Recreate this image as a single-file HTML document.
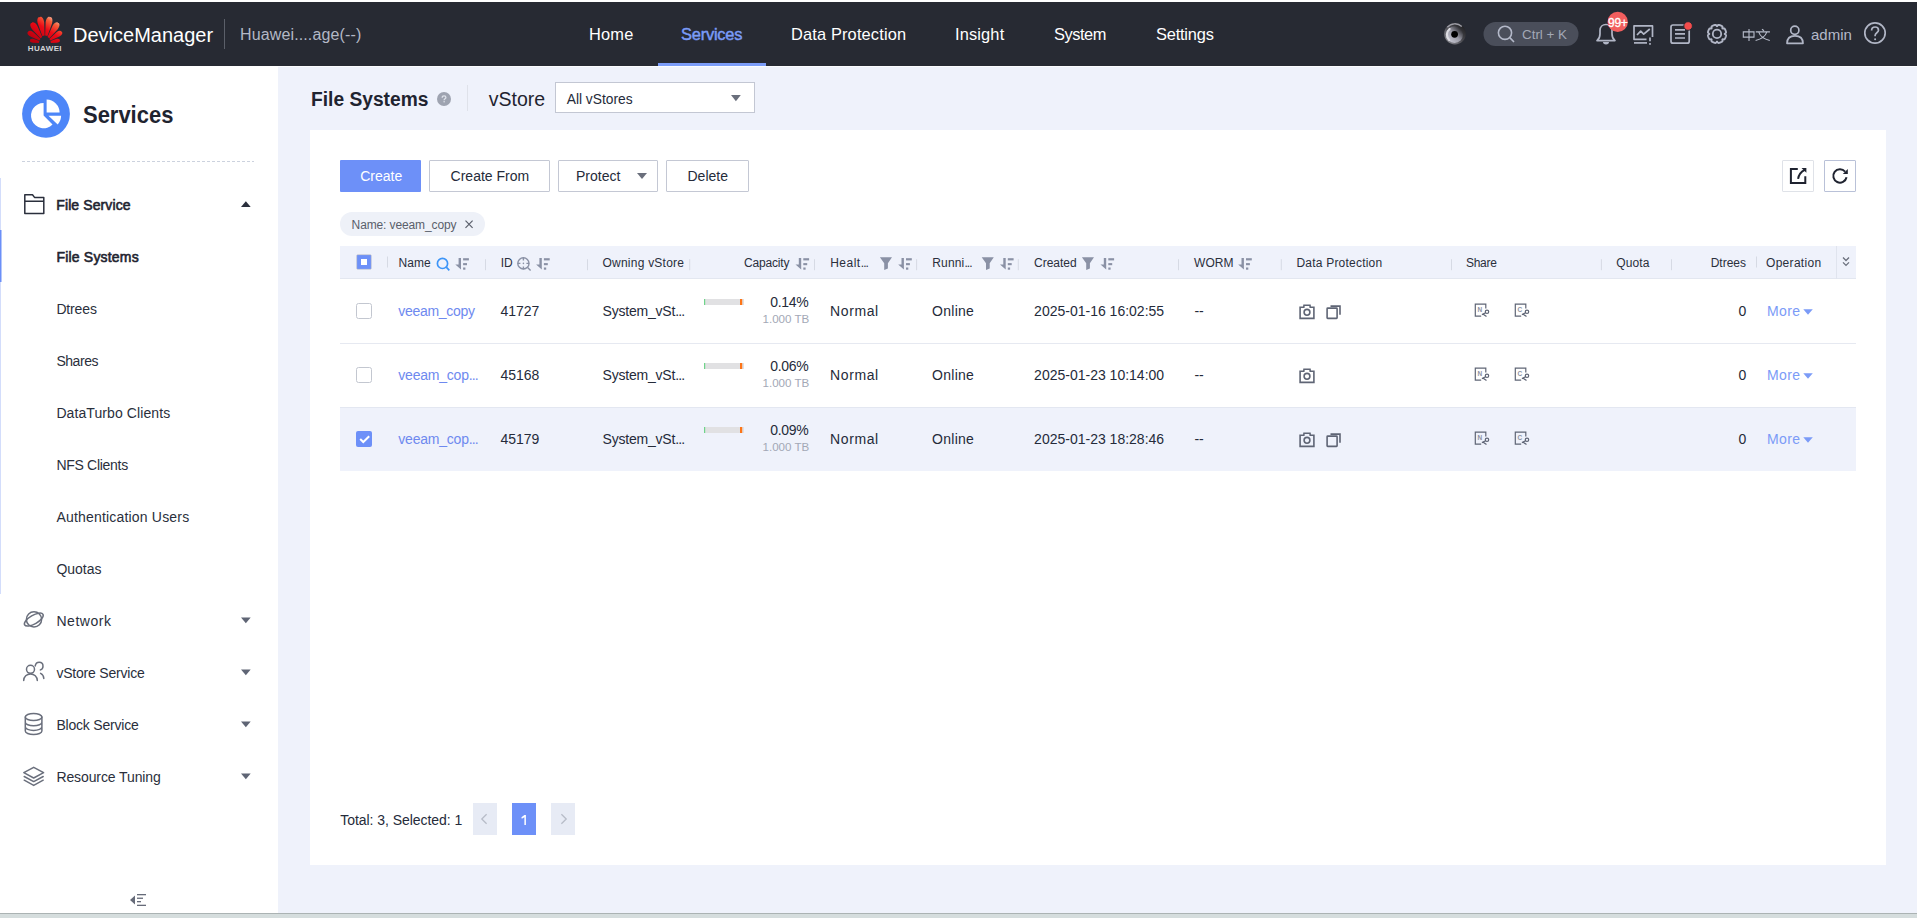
<!DOCTYPE html>
<html><head><meta charset="utf-8">
<style>
*{box-sizing:border-box;margin:0;padding:0}
html,body{width:1917px;height:918px;overflow:hidden}
body{position:relative;background:#eff2fb;font-family:"Liberation Sans",sans-serif;color:#252b3a}
.a{position:absolute;white-space:nowrap;line-height:1}
svg{position:absolute;overflow:visible}
.btn{position:absolute;height:32px;top:160px;border:1px solid #c4c8d4;background:#fff;border-radius:1px}
.el{letter-spacing:-0.9px}
</style></head>
<body>
<div style="position:absolute;left:0;top:0;width:1917px;height:2px;background:#fff"></div>
<div style="position:absolute;left:0;top:2px;width:1917px;height:64px;background:#272a33"></div>
<div style="position:absolute;left:0;top:66px;width:1917px;height:1px;background:#fbfcfe"></div>
<div style="position:absolute;left:0;top:66px;width:278px;height:848px;background:#fff"></div>
<div style="position:absolute;left:310px;top:130px;width:1576px;height:735px;background:#fff"></div>
<div style="position:absolute;left:0;top:913px;width:1917px;height:5px;background:#d5dddd;border-top:1px solid #abb3b3"></div>
<div class="a" style="left:311px;top:89px;font-size:20px;font-weight:700;color:#1f2430;transform:scaleX(0.96);transform-origin:0 0">File Systems</div>
<div class="a" style="left:488.8px;top:90px;font-size:19.5px;color:#1f2430">vStore</div>
<div style="position:absolute;left:555px;top:82px;width:200px;height:31px;border:1px solid #c3c7d3;background:#fff"></div>
<div class="a" style="left:566.7px;top:93px;font-size:13.8px;color:#252b3a">All vStores</div>
<div style="position:absolute;left:340px;top:160px;width:81px;height:32px;background:#6d90f8;border-radius:1px"></div>
<div class="btn" style="left:429px;width:121px"></div>
<div class="btn" style="left:558px;width:100px"></div>
<div class="btn" style="left:666px;width:83px"></div>
<div class="btn" style="left:1782px;width:32px;border-color:#dfe2e8"></div>
<div class="btn" style="left:1824px;width:32px;border-color:#b9c1d8"></div>
<div class="a" style="left:360.2px;top:169px;font-size:14px;color:#fff">Create</div>
<div class="a" style="left:450.6px;top:169px;font-size:14px;color:#252b3a">Create From</div>
<div class="a" style="left:576px;top:169px;font-size:14px;color:#252b3a">Protect</div>
<div class="a" style="left:687.5px;top:169px;font-size:14px;color:#252b3a">Delete</div>
<div style="position:absolute;left:340px;top:212px;width:145px;height:24px;border-radius:12px;background:#eef1f8"></div>
<div class="a" style="left:351.6px;top:219px;font-size:12px;color:#5a5f6b;letter-spacing:-0.12px">Name: veeam_copy</div>
<div style="position:absolute;left:340px;top:246px;width:1516px;height:33px;background:#eff2fb;border-bottom:1px solid #e3e7f0"></div>
<div style="position:absolute;left:340px;top:343px;width:1516px;height:1px;background:#e6e9f1"></div>
<div style="position:absolute;left:340px;top:407px;width:1516px;height:64px;background:#eff2fb"></div>
<div style="position:absolute;left:340px;top:407px;width:1516px;height:1px;background:#e3e7f1"></div>
<div class="a" style="left:398.6px;top:257px;font-size:12px;color:#2a2f3c;letter-spacing:0px">Name</div>
<div class="a" style="left:500.7px;top:257px;font-size:12px;color:#2a2f3c;letter-spacing:0px">ID</div>
<div class="a" style="left:602.5px;top:257px;font-size:12px;color:#2a2f3c;letter-spacing:0.23px">Owning vStore</div>
<div class="a" style="left:830.2px;top:257px;font-size:12px;color:#2a2f3c;letter-spacing:0px"><span style="letter-spacing:0.5px">Healt</span><span class="el">...</span></div>
<div class="a" style="left:932.3px;top:257px;font-size:12px;color:#2a2f3c;letter-spacing:0.15px">Runni<span class="el">...</span></div>
<div class="a" style="left:1034px;top:257px;font-size:12px;color:#2a2f3c;letter-spacing:0px">Created</div>
<div class="a" style="left:1194.1px;top:257px;font-size:12px;color:#2a2f3c;letter-spacing:0px">WORM</div>
<div class="a" style="left:1296.4px;top:257px;font-size:12px;color:#2a2f3c;letter-spacing:0.22px">Data Protection</div>
<div class="a" style="left:1466px;top:257px;font-size:12px;color:#2a2f3c;letter-spacing:-0.3px">Share</div>
<div class="a" style="left:1616.3px;top:257px;font-size:12px;color:#2a2f3c;letter-spacing:0.1px">Quota</div>
<div class="a" style="left:1766px;top:257px;font-size:12px;color:#2a2f3c;letter-spacing:0.3px">Operation</div>
<div class="a" style="right:1127.8px;top:257px;font-size:12px;text-align:right;color:#2a2f3c;letter-spacing:-0.18px">Capacity</div>
<div class="a" style="right:171px;top:257px;font-size:12px;text-align:right;color:#2a2f3c">Dtrees</div>
<div class="a" style="left:398.3px;top:304px;font-size:14px;color:#6e89ef;letter-spacing:-0.3px">veeam_copy</div>
<div class="a" style="left:500.4px;top:304px;font-size:14px;color:#252b3a">41727</div>
<div class="a" style="left:602.5px;top:304px;font-size:14px;color:#252b3a;letter-spacing:-0.2px">System_vSt<span class="el">...</span></div>
<div class="a" style="right:1108.5px;top:295px;font-size:14px;text-align:right;color:#252b3a;letter-spacing:-0.3px">0.14%</div>
<div class="a" style="right:1107.7px;top:313px;font-size:11.6px;text-align:right;color:#a3a8b6">1.000 TB</div>
<div class="a" style="left:830.1px;top:304px;font-size:14px;color:#252b3a;letter-spacing:0.6px">Normal</div>
<div class="a" style="left:932.1px;top:304px;font-size:14px;color:#252b3a;letter-spacing:0.25px">Online</div>
<div class="a" style="left:1034.1px;top:304px;font-size:14px;color:#252b3a">2025-01-16 16:02:55</div>
<div class="a" style="left:1194.4px;top:304px;font-size:14px;color:#252b3a">--</div>
<div class="a" style="right:170.70000000000005px;top:304px;font-size:14px;text-align:right;color:#252b3a">0</div>
<div class="a" style="left:1766.9px;top:304px;font-size:14px;color:#7b9bf7;letter-spacing:0.4px">More</div>
<div class="a" style="left:398.3px;top:368px;font-size:14px;color:#6e89ef;letter-spacing:-0.22px">veeam_cop<span class="el">...</span></div>
<div class="a" style="left:500.4px;top:368px;font-size:14px;color:#252b3a">45168</div>
<div class="a" style="left:602.5px;top:368px;font-size:14px;color:#252b3a;letter-spacing:-0.2px">System_vSt<span class="el">...</span></div>
<div class="a" style="right:1108.5px;top:359px;font-size:14px;text-align:right;color:#252b3a;letter-spacing:-0.3px">0.06%</div>
<div class="a" style="right:1107.7px;top:377px;font-size:11.6px;text-align:right;color:#a3a8b6">1.000 TB</div>
<div class="a" style="left:830.1px;top:368px;font-size:14px;color:#252b3a;letter-spacing:0.6px">Normal</div>
<div class="a" style="left:932.1px;top:368px;font-size:14px;color:#252b3a;letter-spacing:0.25px">Online</div>
<div class="a" style="left:1034.1px;top:368px;font-size:14px;color:#252b3a">2025-01-23 10:14:00</div>
<div class="a" style="left:1194.4px;top:368px;font-size:14px;color:#252b3a">--</div>
<div class="a" style="right:170.70000000000005px;top:368px;font-size:14px;text-align:right;color:#252b3a">0</div>
<div class="a" style="left:1766.9px;top:368px;font-size:14px;color:#7b9bf7;letter-spacing:0.4px">More</div>
<div class="a" style="left:398.3px;top:432px;font-size:14px;color:#6e89ef;letter-spacing:-0.22px">veeam_cop<span class="el">...</span></div>
<div class="a" style="left:500.4px;top:432px;font-size:14px;color:#252b3a">45179</div>
<div class="a" style="left:602.5px;top:432px;font-size:14px;color:#252b3a;letter-spacing:-0.2px">System_vSt<span class="el">...</span></div>
<div class="a" style="right:1108.5px;top:423px;font-size:14px;text-align:right;color:#252b3a;letter-spacing:-0.3px">0.09%</div>
<div class="a" style="right:1107.7px;top:441px;font-size:11.6px;text-align:right;color:#a3a8b6">1.000 TB</div>
<div class="a" style="left:830.1px;top:432px;font-size:14px;color:#252b3a;letter-spacing:0.6px">Normal</div>
<div class="a" style="left:932.1px;top:432px;font-size:14px;color:#252b3a;letter-spacing:0.25px">Online</div>
<div class="a" style="left:1034.1px;top:432px;font-size:14px;color:#252b3a">2025-01-23 18:28:46</div>
<div class="a" style="left:1194.4px;top:432px;font-size:14px;color:#252b3a">--</div>
<div class="a" style="right:170.70000000000005px;top:432px;font-size:14px;text-align:right;color:#252b3a">0</div>
<div class="a" style="left:1766.9px;top:432px;font-size:14px;color:#7b9bf7;letter-spacing:0.4px">More</div>
<div class="a" style="left:340.3px;top:813px;font-size:14px;color:#252b3a;letter-spacing:-0.05px">Total: 3, Selected: 1</div>
<div style="position:absolute;left:473px;top:803px;width:24px;height:32px;background:#e7ebf5"></div>
<div style="position:absolute;left:512px;top:803px;width:24px;height:32px;background:#6d90f8"></div>
<div style="position:absolute;left:551px;top:803px;width:24px;height:32px;background:#e7ebf5"></div>
<svg style="left:0;top:0" width="1917" height="918" viewBox="0 0 1917 918">
<circle cx="444" cy="99" r="7" fill="#9ea3b0"/>
<path d="M442.2,97.7 C442.2,96.5 443,95.9 444.1,95.9 C445.1,95.9 445.9,96.5 445.9,97.5 C445.9,98.7 444.1,98.9 444.1,100.2" fill="none" stroke="#dfe2ea" stroke-width="1.3"/><circle cx="444.1" cy="101.7" r="0.75" fill="#dfe2ea"/>
<rect x="467" y="85" width="1" height="26" fill="#dfe2ea"/>
<path d="M731,95 L740.8,95 L735.9,101.3 Z" fill="#6a6f7c"/>
<path d="M637,173 L647,173 L642,179 Z" fill="#6a6f7c"/>
<path d="M465.5,220.7 L472.6,227.8 M472.6,220.7 L465.5,227.8" stroke="#5a5f6b" stroke-width="1.2"/>
<g fill="none" stroke="#1f2330" stroke-width="2"><path d="M1797.8,168.9 L1790.9,168.9 L1790.9,183 L1805.3,183 L1805.3,176.2"/><path d="M1798.1,178.8 C1798.6,174.8 1800.8,171.8 1804.8,169.8"/></g>
<path d="M1801.5,167.9 L1806.4,167.9 L1806.4,172.8 Z" fill="#1f2330"/>
<g fill="none" stroke="#1f2330" stroke-width="2"><path d="M1846.55,177.3 A6.7,6.7 0 1 1 1845.1,171.6"/></g>
<path d="M1847.8,168.9 L1847.8,174.1 L1842.8,174.1 Z" fill="#1f2330"/>
<g fill="#d6dae4"><rect x="387.0" y="256.5" width="1" height="11"/><rect x="1756.0" y="256.5" width="1" height="11"/><rect x="485.0" y="259.2" width="1" height="11"/><rect x="587.0" y="259.2" width="1" height="11"/><rect x="689.2" y="259.2" width="1" height="11"/><rect x="814.0" y="259.2" width="1" height="11"/><rect x="916.1" y="259.2" width="1" height="11"/><rect x="1017.8" y="259.2" width="1" height="11"/><rect x="1178.0" y="259.2" width="1" height="11"/><rect x="1280.8" y="259.2" width="1" height="11"/><rect x="1451.0" y="259.2" width="1" height="11"/><rect x="1600.9" y="259.2" width="1" height="11"/><rect x="1671.0" y="259.2" width="1" height="11"/></g>
<rect x="1836" y="246" width="1" height="33" fill="#e0e4ee"/>
<path d="M1843,257.5 L1846,260.5 L1849,257.5 M1843,262.4 L1846,265.4 L1849,262.4" fill="none" stroke="#6a6f7c" stroke-width="1.3"/>
<rect x="356.7" y="254.7" width="14.6" height="14.6" rx="1" fill="#6d90f8" stroke="#cfc8bd" stroke-width="0.5"/><rect x="361" y="259" width="6" height="6" fill="#fff"/>
<g fill="none" stroke="#3d95f8" stroke-width="1.7"><circle cx="442.5" cy="263.4" r="5.1"/><path d="M446.3,267.2 L449.3,270.3"/></g>
<g fill="none" stroke="#8a91a5" stroke-width="1.4"><circle cx="523.4" cy="263.4" r="5.6"/><path d="M523.4,257.6 V260.4 M523.4,266.4 V269.2 M517.6,263.4 H520.4 M526.4,263.4 H529.2 M527.6,267.6 L530.6,270.6"/></g><circle cx="523.4" cy="263.4" r="0.8" fill="#8a91a5"/>
<g fill="#8a91a5"><path d="M458.60,258.1 h2.4 v11.5 L455.30,264.40 h3.3 Z"/><rect x="463.10" y="258.20" width="5.8" height="2.2"/><rect x="463.10" y="263.10" width="3.9" height="2.1"/><rect x="463.10" y="267.50" width="2.3" height="2.2"/><path d="M539.40,258.1 h2.4 v11.5 L536.10,264.40 h3.3 Z"/><rect x="543.90" y="258.20" width="5.8" height="2.2"/><rect x="543.90" y="263.10" width="3.9" height="2.1"/><rect x="543.90" y="267.50" width="2.3" height="2.2"/><path d="M798.80,258.1 h2.4 v11.5 L795.50,264.40 h3.3 Z"/><rect x="803.30" y="258.20" width="5.8" height="2.2"/><rect x="803.30" y="263.10" width="3.9" height="2.1"/><rect x="803.30" y="267.50" width="2.3" height="2.2"/><path d="M901.50,258.1 h2.4 v11.5 L898.20,264.40 h3.3 Z"/><rect x="906.00" y="258.20" width="5.8" height="2.2"/><rect x="906.00" y="263.10" width="3.9" height="2.1"/><rect x="906.00" y="267.50" width="2.3" height="2.2"/><path d="M1003.30,258.1 h2.4 v11.5 L1000.00,264.40 h3.3 Z"/><rect x="1007.80" y="258.20" width="5.8" height="2.2"/><rect x="1007.80" y="263.10" width="3.9" height="2.1"/><rect x="1007.80" y="267.50" width="2.3" height="2.2"/><path d="M1103.80,258.1 h2.4 v11.5 L1100.50,264.40 h3.3 Z"/><rect x="1108.30" y="258.20" width="5.8" height="2.2"/><rect x="1108.30" y="263.10" width="3.9" height="2.1"/><rect x="1108.30" y="267.50" width="2.3" height="2.2"/><path d="M1241.50,258.1 h2.4 v11.5 L1238.20,264.40 h3.3 Z"/><rect x="1246.00" y="258.20" width="5.8" height="2.2"/><rect x="1246.00" y="263.10" width="3.9" height="2.1"/><rect x="1246.00" y="267.50" width="2.3" height="2.2"/><path d="M879.90,257.2 H892.00 L887.90,263.20 V268.60 L884.20,270.10 V263.20 Z"/><path d="M981.70,257.2 H993.80 L989.70,263.20 V268.60 L986.00,270.10 V263.20 Z"/><path d="M1081.90,257.2 H1094.00 L1089.90,263.20 V268.60 L1086.20,270.10 V263.20 Z"/></g>
<rect x="356.5" y="303.5" width="15" height="15" rx="2" fill="#fff" stroke="#c3c7d0" stroke-width="1"/>
<rect x="704" y="299" width="40" height="6" fill="#e1e1e3"/><rect x="704" y="299" width="1.2" height="6" fill="#6fd48a"/><rect x="740" y="299" width="2.2" height="6" fill="#fd7518"/>
<g fill="none" stroke="#5f6575" stroke-width="1.6"><path d="M1300.1,307.2 H1303.8 L1304,305.3 H1310 L1310.2,307.2 H1313.9 V318.4 H1300.1 Z"/><circle cx="1307" cy="312.3" r="2.9"/></g>
<g fill="none" stroke="#5f6575" stroke-width="1.6"><rect x="1327.1" y="308.1" width="10" height="10.3" rx="0.6"/><path d="M1330.5,306.1 H1340 V314.8"/></g>
<g fill="none" stroke="#5f6575" stroke-width="1.2"><path d="M1481.2,316.1 H1475.3 V304.2 H1485.8 V308.6"/><circle cx="1487.0" cy="311.8" r="1.7"/><path d="M1485.6,312.8 L1481.9,314.6 M1483.2,314.2 L1486.5,316.6"/></g>
<text x="1477.6" y="312" font-family="Liberation Sans" font-size="6.5" font-weight="700" fill="#8d92a0">N</text>
<g fill="none" stroke="#5f6575" stroke-width="1.2"><path d="M1521.2,316.1 H1515.3 V304.2 H1525.8 V308.6"/><circle cx="1527.0" cy="311.8" r="1.7"/><path d="M1525.6,312.8 L1521.9,314.6 M1523.2,314.2 L1526.5,316.6"/></g>
<text x="1517.6" y="312" font-family="Liberation Sans" font-size="6.5" font-weight="700" fill="#8d92a0">C</text>
<path d="M1803.3,309.2 L1812.8,309.2 L1808,314.8 Z" fill="#7b9bf7"/>
<rect x="356.5" y="367.5" width="15" height="15" rx="2" fill="#fff" stroke="#c3c7d0" stroke-width="1"/>
<rect x="704" y="363" width="40" height="6" fill="#e1e1e3"/><rect x="704" y="363" width="1.2" height="6" fill="#6fd48a"/><rect x="740" y="363" width="2.2" height="6" fill="#fd7518"/>
<g fill="none" stroke="#5f6575" stroke-width="1.6"><path d="M1300.1,371.2 H1303.8 L1304,369.3 H1310 L1310.2,371.2 H1313.9 V382.4 H1300.1 Z"/><circle cx="1307" cy="376.3" r="2.9"/></g>
<g fill="none" stroke="#5f6575" stroke-width="1.2"><path d="M1481.2,380.1 H1475.3 V368.2 H1485.8 V372.6"/><circle cx="1487.0" cy="375.8" r="1.7"/><path d="M1485.6,376.8 L1481.9,378.6 M1483.2,378.2 L1486.5,380.6"/></g>
<text x="1477.6" y="376" font-family="Liberation Sans" font-size="6.5" font-weight="700" fill="#8d92a0">N</text>
<g fill="none" stroke="#5f6575" stroke-width="1.2"><path d="M1521.2,380.1 H1515.3 V368.2 H1525.8 V372.6"/><circle cx="1527.0" cy="375.8" r="1.7"/><path d="M1525.6,376.8 L1521.9,378.6 M1523.2,378.2 L1526.5,380.6"/></g>
<text x="1517.6" y="376" font-family="Liberation Sans" font-size="6.5" font-weight="700" fill="#8d92a0">C</text>
<path d="M1803.3,373.2 L1812.8,373.2 L1808,378.8 Z" fill="#7b9bf7"/>
<rect x="356" y="431" width="16" height="16" rx="2" fill="#6d90f8"/><path d="M360.2,439 L363.3,442 L369.2,436.3" fill="none" stroke="#fff" stroke-width="2"/>
<rect x="704" y="427" width="40" height="6" fill="#e1e1e3"/><rect x="704" y="427" width="1.2" height="6" fill="#6fd48a"/><rect x="740" y="427" width="2.2" height="6" fill="#fd7518"/>
<g fill="none" stroke="#5f6575" stroke-width="1.6"><path d="M1300.1,435.2 H1303.8 L1304,433.3 H1310 L1310.2,435.2 H1313.9 V446.4 H1300.1 Z"/><circle cx="1307" cy="440.3" r="2.9"/></g>
<g fill="none" stroke="#5f6575" stroke-width="1.6"><rect x="1327.1" y="436.1" width="10" height="10.3" rx="0.6"/><path d="M1330.5,434.1 H1340 V442.8"/></g>
<g fill="none" stroke="#5f6575" stroke-width="1.2"><path d="M1481.2,444.1 H1475.3 V432.2 H1485.8 V436.6"/><circle cx="1487.0" cy="439.8" r="1.7"/><path d="M1485.6,440.8 L1481.9,442.6 M1483.2,442.2 L1486.5,444.6"/></g>
<text x="1477.6" y="440" font-family="Liberation Sans" font-size="6.5" font-weight="700" fill="#8d92a0">N</text>
<g fill="none" stroke="#5f6575" stroke-width="1.2"><path d="M1521.2,444.1 H1515.3 V432.2 H1525.8 V436.6"/><circle cx="1527.0" cy="439.8" r="1.7"/><path d="M1525.6,440.8 L1521.9,442.6 M1523.2,442.2 L1526.5,444.6"/></g>
<text x="1517.6" y="440" font-family="Liberation Sans" font-size="6.5" font-weight="700" fill="#8d92a0">C</text>
<path d="M1803.3,437.2 L1812.8,437.2 L1808,442.8 Z" fill="#7b9bf7"/>
<path d="M486.6,814.3 L481.8,819 L486.6,823.7" fill="none" stroke="#b7bcc8" stroke-width="1.3"/>
<path d="M561.4,814.3 L566.2,819 L561.4,823.7" fill="none" stroke="#b7bcc8" stroke-width="1.3"/>
<path d="M521.4,817.2 L524.4,814.9 L525.9,814.9 L525.9,824.9 L524.4,824.9 L524.4,817.3 L521.8,818.8 Z" fill="#fff"/>
</svg>

<!-- SIDEBAR -->
<svg style="left:0;top:66px" width="278" height="847" viewBox="0 66 278 847">
<circle cx="46" cy="113.95" r="23.9" fill="#4d86f8"/>
<g fill="#fff"><path d="M43.6,115.6 L52.51,124.51 A12.6,12.6 0 1 1 43.60,103.00 Z"/><path d="M46.6,112.6 L46.60,99.60 A13,13 0 0 1 59.60,112.60 Z"/><path d="M48.5,115.8 L61.10,115.80 A12.6,12.6 0 0 1 57.72,124.39 Z"/></g>
<line x1="22" y1="161.5" x2="254" y2="161.5" stroke="#ccd2de" stroke-width="1" stroke-dasharray="3,2"/>
<rect x="0" y="178" width="1" height="416" fill="#d3ddfb"/>
<rect x="0" y="230" width="1.5" height="52" fill="#6b8ff8"/>
<!-- folder icon -->
<path d="M24.8,213.6 L24.8,194.8 L32.5,194.8 L34.5,197.4 L43.8,197.4 L43.8,213.6 Z M24.8,201.3 L43.8,201.3" fill="none" stroke="#2a2f3c" stroke-width="1.5" stroke-linejoin="round"/>
<path d="M241,207 L250.7,207 L245.85,201.2 Z" fill="#2a2f3c"/>
<g fill="#5f6575">
<path d="M241,617.5 L250.7,617.5 L245.85,623.3 Z"/>
<path d="M241,669.5 L250.7,669.5 L245.85,675.3 Z"/>
<path d="M241,721.5 L250.7,721.5 L245.85,727.3 Z"/>
<path d="M241,773.5 L250.7,773.5 L245.85,779.3 Z"/>
</g>
<g fill="none" stroke="#6a6f7c" stroke-width="1.5" stroke-linecap="round" stroke-linejoin="round">
<!-- planet -->
<circle cx="34" cy="619.4" r="7.6"/>
<ellipse cx="33.8" cy="619.6" rx="10.6" ry="4.3" transform="rotate(-30 33.8 619.6)"/>
<!-- people -->
<circle cx="30.5" cy="669.3" r="4"/>
<path d="M23.7,680.6 C23.7,676.5 26.8,674 30.5,674 C34.2,674 37.3,676.5 37.3,680.6"/>
<path d="M35.2,665.9 C35.6,663.6 37.2,662.3 39.2,662.3 C41.4,662.3 43,664 43,666.2 C43,668 41.9,669.4 40.4,669.9 M40.6,673.3 C42.6,674.3 43.8,676.2 43.8,678.6"/>
<!-- database -->
<ellipse cx="33.6" cy="717" rx="8.3" ry="3.6"/>
<path d="M25.3,717 L25.3,731 C25.3,733 29,734.6 33.6,734.6 C38.2,734.6 41.9,733 41.9,731 L41.9,717 M25.3,722.2 C25.3,724.2 29,725.8 33.6,725.8 C38.2,725.8 41.9,724.2 41.9,722.2 M25.3,726.8 C25.3,728.8 29,730.4 33.6,730.4 C38.2,730.4 41.9,728.8 41.9,726.8"/>
<!-- layers -->
<path d="M23.8,772.7 L33.7,767.3 L43.6,772.7 L33.7,778 Z"/>
<path d="M24.2,776.5 L33.7,781.6 L43.2,776.5"/>
<path d="M24.2,780.2 L33.7,785.4 L43.2,780.2"/>
</g>
<!-- collapse -->
<g fill="#666b79">
<path d="M135,895.5 L135,904.5 L130,900 Z"/>
<rect x="137" y="894" width="9" height="1.3"/>
<rect x="137" y="897.6" width="6" height="1.3"/>
<rect x="137" y="901" width="4" height="1.3"/>
<rect x="137" y="904.7" width="9" height="1.3"/>
</g>
</svg>

<div class="a" style="left:83px;top:103px;font-size:24px;font-weight:700;color:#1f2430;transform:scaleX(0.915);transform-origin:0 0">Services</div>
<div class="a" style="left:56.3px;top:198px;font-size:14px;color:#1f2430;-webkit-text-stroke:0.6px #1f2430;letter-spacing:0.1px">File Service</div>
<div class="a" style="left:56.4px;top:250px;font-size:14px;color:#1f2430;-webkit-text-stroke:0.6px #1f2430;letter-spacing:0.2px">File Systems</div>
<div class="a" style="left:56.4px;top:302px;font-size:14px;color:#2a2f3c;letter-spacing:-0.15px">Dtrees</div>
<div class="a" style="left:56.4px;top:354px;font-size:14px;color:#2a2f3c;letter-spacing:-0.45px">Shares</div>
<div class="a" style="left:56.4px;top:406px;font-size:14px;color:#2a2f3c;letter-spacing:0.09px">DataTurbo Clients</div>
<div class="a" style="left:56.4px;top:458px;font-size:14px;color:#2a2f3c;letter-spacing:-0.29px">NFS Clients</div>
<div class="a" style="left:56.4px;top:510px;font-size:14px;color:#2a2f3c;letter-spacing:0.19px">Authentication Users</div>
<div class="a" style="left:56.4px;top:562px;font-size:14px;color:#2a2f3c;letter-spacing:0px">Quotas</div>
<div class="a" style="left:56.4px;top:614px;font-size:14px;color:#2a2f3c;letter-spacing:0.55px">Network</div>
<div class="a" style="left:56.4px;top:666px;font-size:14px;color:#2a2f3c;letter-spacing:-0.2px">vStore Service</div>
<div class="a" style="left:56.4px;top:718px;font-size:14px;color:#2a2f3c;letter-spacing:-0.2px">Block Service</div>
<div class="a" style="left:56.4px;top:770px;font-size:14px;color:#2a2f3c;letter-spacing:-0.1px">Resource Tuning</div>

<svg style="left:0;top:0" width="1917" height="70" viewBox="0 0 1917 70">
<defs>
<linearGradient id="pg" gradientUnits="userSpaceOnUse" x1="36" y1="42" x2="52" y2="17"><stop offset="0" stop-color="#b8000e"/><stop offset="0.55" stop-color="#ec0a16"/><stop offset="0.85" stop-color="#f5603a"/><stop offset="1" stop-color="#f6b09a"/></linearGradient>
<linearGradient id="eyeo" x1="0" y1="1" x2="1" y2="0"><stop offset="0" stop-color="#9a9aa2"/><stop offset="0.5" stop-color="#4a4a50"/><stop offset="1" stop-color="#141416"/></linearGradient><linearGradient id="eyei" x1="0.1" y1="0.9" x2="0.9" y2="0.1"><stop offset="0" stop-color="#c8c8d4"/><stop offset="0.5" stop-color="#9a9aa6"/><stop offset="1" stop-color="#1e1e22"/></linearGradient><radialGradient id="eyeg" cx="0.35" cy="0.6" r="0.7"><stop offset="0" stop-color="#e8e8ec"/><stop offset="0.45" stop-color="#b9b9c2"/><stop offset="0.8" stop-color="#3a3a40"/><stop offset="1" stop-color="#111"/></radialGradient>
</defs>
<g fill="url(#pg)">
<path d="M45.16,35.50 L45.63,22.21 C46.32,16.00 50.16,15.95 49.86,17.48 C50.16,15.95 53.70,17.43 52.01,23.45 L47.47,35.95 Z"/>
<path d="M44.64,35.50 L44.17,22.21 C43.48,16.00 39.64,15.95 39.94,17.48 C39.64,15.95 36.10,17.43 37.79,23.45 L42.33,35.95 Z"/>
<path d="M47.54,37.06 L52.55,25.83 C55.23,20.85 58.65,22.23 57.87,23.40 C58.65,22.23 61.25,24.84 57.72,29.25 L49.33,38.25 Z"/>
<path d="M42.26,37.06 L37.25,25.83 C34.57,20.85 31.15,22.23 31.93,23.40 C31.15,22.23 28.55,24.84 32.08,29.25 L40.47,38.25 Z"/>
<path d="M49.29,38.91 L56.48,32.20 C60.20,29.22 62.40,31.42 61.41,32.07 C62.40,31.42 63.56,34.30 59.37,36.56 L50.38,40.56 Z"/>
<path d="M40.51,38.91 L33.32,32.20 C29.60,29.22 27.40,31.42 28.39,32.07 C27.40,31.42 26.24,34.30 30.43,36.56 L39.42,40.56 Z"/>
<path d="M50.54,40.95 L56.03,38.95 C59.45,37.99 60.33,40.14 59.45,40.30 C60.33,40.14 60.28,42.46 56.74,42.79 L50.90,42.90 Z"/>
<path d="M39.26,40.95 L33.77,38.95 C30.35,37.99 29.47,40.14 30.35,40.30 C29.47,40.14 29.52,42.46 33.06,42.79 L38.90,42.90 Z"/>
</g>
<rect x="224" y="19" width="1" height="30" fill="#5b5f69"/>
<rect x="658" y="63" width="108" height="3" fill="#7b9cf8"/>
<!-- eye -->
<circle cx="1455" cy="33.7" r="10.8" fill="url(#eyeo)"/>
<path d="M1447.3,27.3 A10,10 0 0 1 1461.8,26.6" fill="none" stroke="#9d9da5" stroke-width="1.4"/>
<circle cx="1454.6" cy="34.6" r="8.4" fill="url(#eyei)"/>
<path d="M1449.2,40 A7.3,7.3 0 0 1 1449.6,29" fill="none" stroke="#dcdce2" stroke-width="2.2" stroke-linecap="round"/>
<circle cx="1454.6" cy="34.3" r="3.4" fill="#000"/>
<!-- search pill -->
<rect x="1483.5" y="22" width="95" height="24" rx="12" fill="#4a4e5a"/>
<g fill="none" stroke="#b4b9c9" stroke-width="1.6">
<circle cx="1505" cy="32.8" r="6.6"/>
<path d="M1509.8,37.6 L1514,42"/>
</g>
<g fill="none" stroke="#b1b6c6" stroke-width="1.7" stroke-linejoin="round">
<!-- bell -->
<path d="M1597,40.6 C1599.3,38.8 1600,36.5 1600,34 L1600,30.5 C1600,26.7 1602.7,24.5 1606,24.5 C1609.3,24.5 1612,26.7 1612,30.5 L1612,34 C1612,36.5 1612.7,38.8 1615,40.6 Z"/>
<!-- monitor -->
<path d="M1646.5,39.3 L1634,39.3 L1634,25.9 L1652.5,25.9 L1652.5,37"/>
<path d="M1637,35 L1640.7,31.2 L1643.7,34.2 L1649.8,29"/>
<path d="M1634,42.9 L1647,42.9"/>
<path d="M1650,37.5 L1650,41.3"/>
<!-- doc -->
<rect x="1671" y="25" width="18.2" height="18.2" rx="2"/>
<path d="M1675,29.9 L1685,29.9 M1675,33.9 L1685,33.9 M1675,38 L1685,38"/>
<!-- gear -->
<path d="M1724.70,33.90 L1724.79,34.10 L1725.05,34.32 L1725.38,34.56 L1725.70,34.81 L1725.94,35.08 L1726.04,35.33 L1726.04,35.58 L1726.00,35.81 L1725.95,36.05 L1725.89,36.28 L1725.82,36.51 L1725.75,36.74 L1725.67,36.97 L1725.59,37.20 L1725.50,37.42 L1725.40,37.64 L1725.30,37.86 L1725.20,38.08 L1725.09,38.29 L1724.97,38.50 L1724.84,38.71 L1724.72,38.91 L1724.58,39.11 L1724.41,39.28 L1724.15,39.39 L1723.80,39.41 L1723.39,39.36 L1722.99,39.29 L1722.66,39.27 L1722.44,39.34 L1722.37,39.56 L1722.39,39.89 L1722.46,40.29 L1722.51,40.70 L1722.49,41.05 L1722.38,41.31 L1722.21,41.48 L1722.01,41.62 L1721.81,41.74 L1721.60,41.87 L1721.39,41.99 L1721.18,42.10 L1720.96,42.20 L1720.74,42.30 L1720.52,42.40 L1720.30,42.49 L1720.07,42.57 L1719.84,42.65 L1719.61,42.72 L1719.38,42.79 L1719.15,42.85 L1718.91,42.90 L1718.68,42.94 L1718.43,42.94 L1718.18,42.84 L1717.91,42.60 L1717.66,42.28 L1717.42,41.95 L1717.20,41.69 L1717.00,41.60 L1716.80,41.69 L1716.58,41.95 L1716.34,42.28 L1716.09,42.60 L1715.82,42.84 L1715.57,42.94 L1715.32,42.94 L1715.09,42.90 L1714.85,42.85 L1714.62,42.79 L1714.39,42.72 L1714.16,42.65 L1713.93,42.57 L1713.70,42.49 L1713.48,42.40 L1713.26,42.30 L1713.04,42.20 L1712.82,42.10 L1712.61,41.99 L1712.40,41.87 L1712.19,41.74 L1711.99,41.62 L1711.79,41.48 L1711.62,41.31 L1711.51,41.05 L1711.49,40.70 L1711.54,40.29 L1711.61,39.89 L1711.63,39.56 L1711.56,39.34 L1711.34,39.27 L1711.01,39.29 L1710.61,39.36 L1710.20,39.41 L1709.85,39.39 L1709.59,39.28 L1709.42,39.11 L1709.28,38.91 L1709.16,38.71 L1709.03,38.50 L1708.91,38.29 L1708.80,38.08 L1708.70,37.86 L1708.60,37.64 L1708.50,37.42 L1708.41,37.20 L1708.33,36.97 L1708.25,36.74 L1708.18,36.51 L1708.11,36.28 L1708.05,36.05 L1708.00,35.81 L1707.96,35.58 L1707.96,35.33 L1708.06,35.08 L1708.30,34.81 L1708.62,34.56 L1708.95,34.32 L1709.21,34.10 L1709.30,33.90 L1709.21,33.70 L1708.95,33.48 L1708.62,33.24 L1708.30,32.99 L1708.06,32.72 L1707.96,32.47 L1707.96,32.22 L1708.00,31.99 L1708.05,31.75 L1708.11,31.52 L1708.18,31.29 L1708.25,31.06 L1708.33,30.83 L1708.41,30.60 L1708.50,30.38 L1708.60,30.16 L1708.70,29.94 L1708.80,29.72 L1708.91,29.51 L1709.03,29.30 L1709.16,29.09 L1709.28,28.89 L1709.42,28.69 L1709.59,28.52 L1709.85,28.41 L1710.20,28.39 L1710.61,28.44 L1711.01,28.51 L1711.34,28.53 L1711.56,28.46 L1711.63,28.24 L1711.61,27.91 L1711.54,27.51 L1711.49,27.10 L1711.51,26.75 L1711.62,26.49 L1711.79,26.32 L1711.99,26.18 L1712.19,26.06 L1712.40,25.93 L1712.61,25.81 L1712.82,25.70 L1713.04,25.60 L1713.26,25.50 L1713.48,25.40 L1713.70,25.31 L1713.93,25.23 L1714.16,25.15 L1714.39,25.08 L1714.62,25.01 L1714.85,24.95 L1715.09,24.90 L1715.32,24.86 L1715.57,24.86 L1715.82,24.96 L1716.09,25.20 L1716.34,25.52 L1716.58,25.85 L1716.80,26.11 L1717.00,26.20 L1717.20,26.11 L1717.42,25.85 L1717.66,25.52 L1717.91,25.20 L1718.18,24.96 L1718.43,24.86 L1718.68,24.86 L1718.91,24.90 L1719.15,24.95 L1719.38,25.01 L1719.61,25.08 L1719.84,25.15 L1720.07,25.23 L1720.30,25.31 L1720.52,25.40 L1720.74,25.50 L1720.96,25.60 L1721.18,25.70 L1721.39,25.81 L1721.60,25.93 L1721.81,26.06 L1722.01,26.18 L1722.21,26.32 L1722.38,26.49 L1722.49,26.75 L1722.51,27.10 L1722.46,27.51 L1722.39,27.91 L1722.37,28.24 L1722.44,28.46 L1722.66,28.53 L1722.99,28.51 L1723.39,28.44 L1723.80,28.39 L1724.15,28.41 L1724.41,28.52 L1724.58,28.69 L1724.72,28.89 L1724.84,29.09 L1724.97,29.30 L1725.09,29.51 L1725.20,29.72 L1725.30,29.94 L1725.40,30.16 L1725.50,30.38 L1725.59,30.60 L1725.67,30.83 L1725.75,31.06 L1725.82,31.29 L1725.89,31.52 L1725.95,31.75 L1726.00,31.99 L1726.04,32.22 L1726.04,32.47 L1725.94,32.72 L1725.70,32.99 L1725.38,33.24 L1725.05,33.48 L1724.79,33.70Z" stroke-width="1.9"/>
<circle cx="1717" cy="33.9" r="4.2" stroke-width="1.8"/>
<!-- person -->
<circle cx="1794.8" cy="30.3" r="4.1"/>
<path d="M1787,43.3 C1787,38.3 1790.3,35.8 1795,35.8 C1799.7,35.8 1803,38.3 1803,43.3 Z"/>
<!-- help -->
<circle cx="1875" cy="33" r="10.2"/>
<path d="M1871.6,30.6 C1871.6,28.4 1873.1,27 1875.1,27 C1877.1,27 1878.5,28.3 1878.5,30.2 C1878.5,32.6 1875.1,32.9 1875.1,35.4 L1875.1,36.2"/>
</g>
<rect x="1649.2" y="43" width="1.6" height="1.8" fill="#b1b6c6"/>
<path d="M1603,42 A3,2.4 0 0 0 1609,42 Z" fill="#b1b6c6"/>
<circle cx="1875.1" cy="39.2" r="1" fill="#b1b6c6"/>
<circle cx="1617.7" cy="21.9" r="10.2" fill="#f25e5e"/>
<circle cx="1688.1" cy="26" r="4.3" fill="#f44c4c" stroke="#272a33" stroke-width="1"/>
<!-- 中文 -->
<g fill="none" stroke="#b8bdcc" stroke-width="1.1">
<path d="M1743.3,31.9 L1754,31.9 L1754,37.1 L1743.3,37.1 Z M1749,29 L1749,40.9"/>
<path d="M1762,29.2 L1764,30.8 M1755.8,31.9 L1769.9,31.9 M1758.6,31.9 C1760,36 1763.5,39 1769.8,40.5 M1766.9,31.9 C1765.5,36 1762,39 1755.6,40.5"/>
</g>
</svg>

<div class="a" style="left:27.8px;top:45px;font-size:8px;font-weight:700;color:#d2d2d6;letter-spacing:0.35px">HUAWEI</div>
<div class="a" style="left:73px;top:25px;font-size:20px;color:#fff">DeviceManager</div>
<div class="a" style="left:240px;top:27px;font-size:16px;color:#b3b8c6;letter-spacing:0.13px">Huawei....age(--)</div>
<div class="a" style="left:589px;top:26px;font-size:16.4px;color:#fff;letter-spacing:0.2px">Home</div>
<div class="a" style="left:791px;top:26px;font-size:16.4px;color:#fff;letter-spacing:0.15px">Data Protection</div>
<div class="a" style="left:955px;top:26px;font-size:16.4px;color:#fff;letter-spacing:0.15px">Insight</div>
<div class="a" style="left:1054px;top:26px;font-size:16.4px;color:#fff;letter-spacing:-0.45px">System</div>
<div class="a" style="left:1156px;top:26px;font-size:16.4px;color:#fff;letter-spacing:-0.2px">Settings</div>
<div class="a" style="left:681px;top:26px;font-size:16.4px;color:#7b9cf8;-webkit-text-stroke:0.45px #7b9cf8;letter-spacing:-0.2px">Services</div>
<div class="a" style="left:1522px;top:28px;font-size:13.4px;color:#a3a8b6">Ctrl + K</div>
<div class="a" style="left:1607.5px;top:17px;font-size:12px;color:#fff;width:20.4px;text-align:center;letter-spacing:-0.4px;-webkit-text-stroke:0.3px #fff">99+</div>
<div class="a" style="left:1811px;top:27px;font-size:15px;color:#b4b9c9">admin</div>

</body></html>
